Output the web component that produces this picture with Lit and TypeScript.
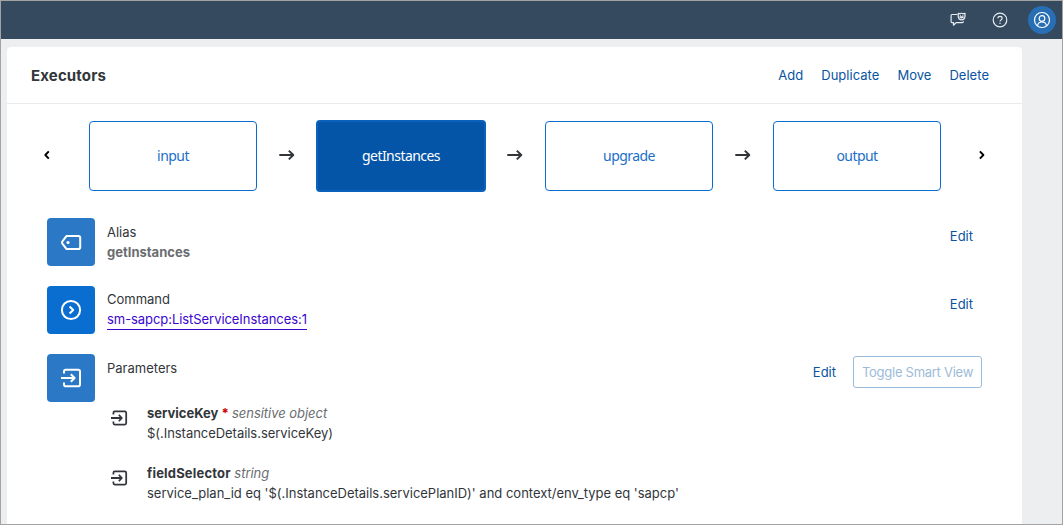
import { LitElement, html, css, svg, nothing } from "lit";
import { customElement, property } from "lit/decorators.js";
import { classMap } from "lit/directives/class-map.js";

const icons: Record<string, unknown> = {
  feedback: svg`
    <path d="M7.4 2.5H2Q1.1 2.5 1.1 3.4V9.8Q1.1 10.6 2 10.6H3.5V13.2L6.2 10.6H12.4Q13.3 10.6 13.3 9.8V9.2" />
    <path d="M8.2 1.3Q9.4 2 10.2 1.5Q11.5 1 12.8 1.5Q13.8 2 15 1.3V4.4Q14.6 7.9 11.6 7.9Q8.6 7.9 8.2 4.4Z" />
    <path d="M9.9 4.9Q11.6 7.1 13.3 4.9ZM9.9 3.3H10.7M12.5 3.3H13.3" />`,
  help: svg`
    <circle cx="8" cy="8" r="6.8" />
    <path d="M5.9 6.3Q5.9 4.4 8 4.4Q10.1 4.4 10.1 6.2Q10.1 7.2 9 7.9Q8 8.5 8 9.6" />
    <path d="M8 10.7V12" />`,
  person: svg`
    <circle cx="8" cy="8" r="7.5" />
    <circle cx="8" cy="6.5" r="2.8" />
    <path d="M3.6 13.7Q4 10 8 10Q12 10 12.4 13.7" />`,
  tag: svg`
    <path d="M5.6 3.9H17.4Q19.2 3.9 19.2 5.7V15.3Q19.2 17.1 17.4 17.1H5.6L1.2 11.3Q.8 10.5 1.2 9.7Z" />
    <circle class="dot" cx="7" cy="10.5" r="1.6" />`,
  command: svg`
    <circle cx="10" cy="10" r="9.1" />
    <path d="M8.6 6.5L12.2 10L8.6 13.5" />`,
  input: svg`
    <path d="M3 5.6V3.6Q3 1.8 4.8 1.8H17.2Q19 1.8 19 3.6V16.4Q19 18.2 17.2 18.2H4.8Q3 18.2 3 16.4V14.4" />
    <path d="M0 10H13.2M9.8 6.2L13.6 10L9.8 13.8" />`,
  arrow: svg`<path d="M.3 8H14.3M9.8 3.6L14.3 8L9.8 12.4" />`,
  left: svg`<path d="M9.8 4.4L6.3 8L9.8 11.6" />`,
  right: svg`<path d="M5.9 4.4L9.4 8L5.9 11.6" />`,
};

@customElement("ui-icon")
export class UiIcon extends LitElement {
  @property() name = "";
  @property({ type: Number }) box = 16;

  static styles = css`
    :host { display: block; width: 16px; height: 16px; flex: none; }
    svg {
      display: block; width: 100%; height: 100%; overflow: visible;
      fill: none; stroke: currentColor; stroke-width: var(--stroke, 1.2);
      stroke-linejoin: round;
    }
    .dot { fill: currentColor; stroke: none; }
  `;

  render() {
    return html`<svg viewBox="0 0 ${this.box} ${this.box}">${icons[this.name]}</svg>`;
  }
}

@customElement("executor-strip")
export class ExecutorStrip extends LitElement {
  @property({ type: Array }) nodes: string[] = [];
  @property() active = "";

  static styles = css`
    :host { display: flex; align-items: center; height: 72px; padding: 16px 32px 0; }
    .chev { --stroke: 1.9; color: #000; margin-bottom: 2px; }
    .node {
      box-sizing: border-box; width: 168px; height: 70px; flex: none;
      display: flex; align-items: center; justify-content: center;
      border: 1px solid #0a6ed1; border-radius: 4px; color: #1a6fc9;
      padding: 0 0 2px;
      font: 14px "Noto Sans", sans-serif; letter-spacing: -0.55px;
    }
    .node.active {
      width: 170px; height: 72px; margin: 0 -1px; border-width: 2px;
      background: #0455a8; color: #fff; border-color: #0a62bd;
    }
    .first { margin-left: 34px; }
    .last { margin-right: 33px; }
    .gap {
      width: 60px; display: flex; justify-content: center; box-sizing: border-box;
      color: #32363a; --stroke: 1.9; padding-bottom: 2px;
    }
  `;

  render() {
    const last = this.nodes.length - 1;
    return html`
      <ui-icon class="chev" name="left"></ui-icon>
      ${this.nodes.map((n, i) => html`
        <div class=${classMap({ node: true, active: n === this.active, first: i === 0, last: i === last })}>${n}</div>
        ${i < last ? html`<div class="gap"><ui-icon name="arrow"></ui-icon></div>` : nothing}
      `)}
      <ui-icon class="chev" name="right"></ui-icon>
    `;
  }
}

@customElement("app-root")
export class AppRoot extends LitElement {
  static styles = css`
    :host {
      display: flex; flex-direction: column; box-sizing: border-box;
      width: 1063px; height: 525px; overflow: hidden;
      border: 1px solid #a3a3a3; background: #edeef0;
      font: 13px/20px Inter, sans-serif; color: #32363a;
    }
    .shell {
      height: 38px; flex: none; box-sizing: border-box; background: #354a5f;
      display: flex; align-items: center; justify-content: flex-end;
      padding-right: 6px; color: #e8edf2;
    }
    .help { margin: 0 20px 0 26px; }
    .avatar {
      width: 28px; height: 28px; border-radius: 50%; background: #286eb4; color: #fff;
      display: flex; align-items: center; justify-content: center;
    }
    .card {
      flex: 1; margin: 8px 40px 0 6px; background: #fff; border-radius: 4px 4px 0 0;
      box-sizing: border-box;
    }
    .head {
      height: 57px; box-sizing: border-box; border-bottom: 1px solid #ebebeb;
      display: flex; align-items: center; padding: 0 33px 0 24px;
    }
    .title { flex: 1; padding-top: 2px; font-size: 15px; font-weight: 700; letter-spacing: 0.15px; }
    .link { color: #0854a0; }
    .head .link { margin-left: 18px; letter-spacing: 0.03px; }
    .sections { padding: 26px 40px 0; display: grid; gap: 20px; }
    .row { display: flex; height: 48px; }
    .tile {
      width: 48px; height: 48px; border-radius: 4px; background: #2b79c6; color: #fff;
      display: flex; align-items: center; justify-content: center; flex: none;
      --stroke: 2;
    }
    .tile.strong { background: #0a6ed1; }
    .tile ui-icon { width: 20px; height: 20px; }
    .text { flex: 1; margin-left: 12px; padding-top: 4px; }
    .text.up { padding-top: 3px; }
    .alias { color: #6a6d70; font-weight: 700; }
    .cmd {
      display: inline-block; color: #3a04d0; border-bottom: 1px solid #3a04d0;
      letter-spacing: -0.06px;
    }
    .edit { padding: 8px 9px 0 0; }
    .edit.wide { padding-right: 17px; }
    .toggle {
      box-sizing: border-box; width: 129px; height: 32px; margin-top: 2px;
      border: 1px solid #9cbbd9; border-radius: 3px; color: #9cbbd9;
      text-align: center; line-height: 31px; letter-spacing: -0.27px; white-space: nowrap;
    }
    .params { padding: 1px 40px 0 103px; display: grid; gap: 20px; }
    .param { display: flex; }
    .param ui-icon { margin: 7px 20px 0 1px; --stroke: 2.2; }
    .key { font-weight: 700; }
    .key.spaced { letter-spacing: 0.18px; }
    .star { color: #c00; font-weight: 700; margin: 0 -0.5px; }
    .type { color: #6a6d70; font-style: italic; letter-spacing: -0.04px; }
    .expr { letter-spacing: -0.04px; }
    .expr.long { letter-spacing: -0.01px; }
  `;

  render() {
    return html`
      <div class="shell">
        <ui-icon name="feedback"></ui-icon>
        <ui-icon class="help" name="help"></ui-icon>
        <div class="avatar"><ui-icon name="person"></ui-icon></div>
      </div>
      <div class="card">
        <div class="head">
          <div class="title">Executors</div>
          ${["Add", "Duplicate", "Move", "Delete"].map((t) => html`<span class="link">${t}</span>`)}
        </div>
        <executor-strip .nodes=${["input", "getInstances", "upgrade", "output"]} active="getInstances"></executor-strip>
        <div class="sections">
          <div class="row">
            <div class="tile"><ui-icon name="tag" box="20"></ui-icon></div>
            <div class="text"><div>Alias</div><div class="alias">getInstances</div></div>
            <div class="link edit">Edit</div>
          </div>
          <div class="row">
            <div class="tile strong"><ui-icon name="command" box="20"></ui-icon></div>
            <div class="text up"><div>Command</div><div class="cmd">sm-sapcp:ListServiceInstances:1</div></div>
            <div class="link edit">Edit</div>
          </div>
          <div class="row">
            <div class="tile"><ui-icon name="input" box="20"></ui-icon></div>
            <div class="text"><div>Parameters</div></div>
            <div class="link edit wide">Edit</div>
            <div class="toggle">Toggle Smart View</div>
          </div>
        </div>
        <div class="params">
          <div class="param">
            <ui-icon name="input" box="20"></ui-icon>
            <div>
              <div><span class="key">serviceKey</span> <span class="star">*</span> <span class="type">sensitive object</span></div>
              <div class="expr">$(.InstanceDetails.serviceKey)</div>
            </div>
          </div>
          <div class="param">
            <ui-icon name="input" box="20"></ui-icon>
            <div>
              <div><span class="key spaced">fieldSelector</span> <span class="type">string</span></div>
              <div class="expr long">service_plan_id eq '$(.InstanceDetails.servicePlanID)' and context/env_type eq 'sapcp'</div>
            </div>
          </div>
        </div>
      </div>
    `;
  }
}
